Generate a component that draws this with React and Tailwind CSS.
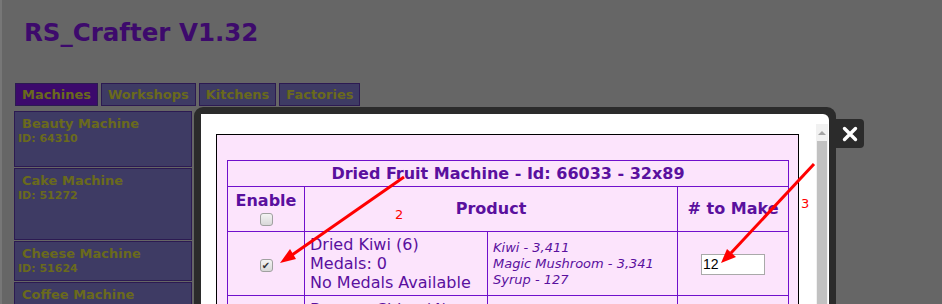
const FONT = { fontFamily: '"DejaVu Sans", Verdana, sans-serif' };

function Box({ checked }) {
  return (
    <span className="inline-flex h-[13px] w-[13px] items-center justify-center rounded-[3px] border border-[#a0a0a0] bg-gradient-to-b from-[#f4f4f4] to-[#d8d8d8] text-[10px] leading-none text-[#333]">
      {checked ? '✔' : ''}
    </span>
  );
}

const cards = [
  { name: 'Beauty Machine', id: '64310', h: 'h-[56px]' },
  { name: 'Cake Machine', id: '51272', h: 'h-[72px]' },
  { name: 'Cheese Machine', id: '51624', h: 'h-[40px]' },
  { name: 'Coffee Machine', id: '50911', h: 'h-[40px]' },
];

export default function App() {
  return (
    <div className="relative h-[304px] w-[942px] overflow-hidden bg-[#666666]" style={FONT}>
      <div className="h-full border-l-2 border-[#777]">
        {/* page behind the overlay */}
        <h1 className="pl-[22px] pt-[17px] text-[24.5px] font-bold leading-[32px] text-[#3d0a6c]">
          RS_Crafter V1.32
        </h1>
        <div className="mt-[34px] flex gap-[3px] pl-[13px]">
          {['Machines', 'Workshops', 'Kitchens', 'Factories'].map((t, i) => (
            <div
              key={t}
              className={`h-[23px] border border-[#2c1a52] px-[6px] text-[13px] font-bold leading-[22px] text-[#6a6a1c] ${
                i === 0 ? 'bg-[#3c0a6c]' : 'bg-[#3e3b64]'
              }`}
            >
              {t}
            </div>
          ))}
        </div>
        <div className="mt-[5px] flex w-[190px] flex-col gap-[1px] pl-[12px]">
          {cards.map((c) => (
            <div key={c.name} className={`${c.h} border border-[#2c1a52] bg-[#3e3b64] pl-[3px] pt-[4px]`}>
              <div className="pl-[4px] text-[13px] font-bold leading-[16px] text-[#6a6a1c]">{c.name}</div>
              <div className="text-[11px] font-bold leading-[14px] text-[#6a6a1c]">ID: {c.id}</div>
            </div>
          ))}
        </div>
      </div>

      {/* modal window */}
      <div className="absolute left-[194px] top-[107px] h-[210px] w-[642px] rounded-t-[9px] bg-[#2b2b2b] px-[7px] pt-[7px]">
        <div className="flex h-full rounded-tr-[6px] bg-white pl-[15px] pt-[10px]">
          <div className="flex-1 pt-[10px]">
            <div className="h-[200px] w-[583px] border border-black bg-[#fce4fc] pl-[10px] pt-[25px]">
              <table className="w-[562px] border-collapse text-[#5a109e]">
                <tbody>
                  <tr className="h-[26px]">
                    <th colSpan={4} className="border border-[#7010cc] text-[16px] font-bold">
                      Dried Fruit Machine - Id: 66033 - 32x89
                    </th>
                  </tr>
                  <tr className="h-[45px]">
                    <th className="w-[77px] border border-[#7010cc] align-top text-[16px] font-bold leading-[20px]">
                      <div className="pt-[4px]">Enable</div>
                      <div className="flex justify-center pt-[2px]">
                        <Box />
                      </div>
                    </th>
                    <th colSpan={2} className="border border-[#7010cc] text-[16px] font-bold">
                      Product
                    </th>
                    <th className="w-[111px] border border-[#7010cc] text-[16px] font-bold">
                      # to Make
                    </th>
                  </tr>
                  <tr className="h-[64px]">
                    <td className="border border-[#7010cc] text-center">
                      <div className="flex justify-center pt-[4px]">
                        <Box checked />
                      </div>
                    </td>
                    <td className="w-[183px] border border-[#7010cc] pl-[5px] text-[16px] leading-[19px]">
                      Dried Kiwi (6)
                      <br />
                      Medals: 0
                      <br />
                      No Medals Available
                    </td>
                    <td className="w-[190px] border border-[#7010cc] pl-[5px] text-[13px] italic leading-[16px]">
                      Kiwi - 3,411
                      <br />
                      Magic Mushroom - 3,341
                      <br />
                      Syrup - 127
                    </td>
                    <td className="border border-[#7010cc] text-center">
                      <input
                        readOnly
                        value="12"
                        className="mt-[2px] h-[21px] w-[64px] border border-[#a9a9a9] bg-white px-[1px] text-[14px] text-black"
                        style={{ fontFamily: '"Liberation Sans", Arial, sans-serif' }}
                      />
                    </td>
                  </tr>
                  <tr className="h-[30px]">
                    <td className="border border-[#7010cc]"></td>
                    <td className="border border-[#7010cc] pl-[5px] pt-[4px] align-top text-[16px] leading-[19px]">
                      Banana Chips (4)
                    </td>
                    <td className="border border-[#7010cc]"></td>
                    <td className="border border-[#7010cc]"></td>
                  </tr>
                </tbody>
              </table>
            </div>
          </div>
          {/* scrollbar */}
          <div className="ml-[17px] mr-[1px] flex w-[15px] flex-col bg-[#f1f1f1]">
            <div className="flex h-[17px] items-center justify-center">
              <span className="h-0 w-0 border-x-[4px] border-b-[4px] border-x-transparent border-b-[#a3a3a3]" />
            </div>
            <div className="mx-[1px] flex-1 bg-[#c1c1c1]" />
          </div>
        </div>
      </div>

      {/* close button */}
      <div className="absolute left-[835px] top-[119px] flex h-[29px] w-[29px] items-center justify-center rounded-r-[4px] bg-[#2b2b2b]">
        <svg width="16" height="16" viewBox="0 0 16 16">
          <path d="M2.5 2.5 L13.5 13.5 M13.5 2.5 L2.5 13.5" stroke="white" strokeWidth="3.4" strokeLinecap="round" />
        </svg>
      </div>

      {/* annotations */}
      <svg className="absolute left-0 top-0" width="942" height="304">
        <line x1="404" y1="177" x2="292" y2="255" stroke="#ff0000" strokeWidth="3" />
        <polygon points="280,263 290,249 296,259" fill="#ff0000" />
        <line x1="814" y1="164" x2="731" y2="253" stroke="#ff0000" strokeWidth="3" />
        <polygon points="721,263 727,249 736,257" fill="#ff0000" />
      </svg>
      <span className="absolute left-[395px] top-[205px] text-[13px] text-[#ff0000]" style={{ fontFamily: '"DejaVu Sans", sans-serif' }}>
        2
      </span>
      <span className="absolute left-[801px] top-[194px] text-[13px] text-[#ff0000]" style={{ fontFamily: '"DejaVu Sans", sans-serif' }}>
        3
      </span>
    </div>
  );
}
